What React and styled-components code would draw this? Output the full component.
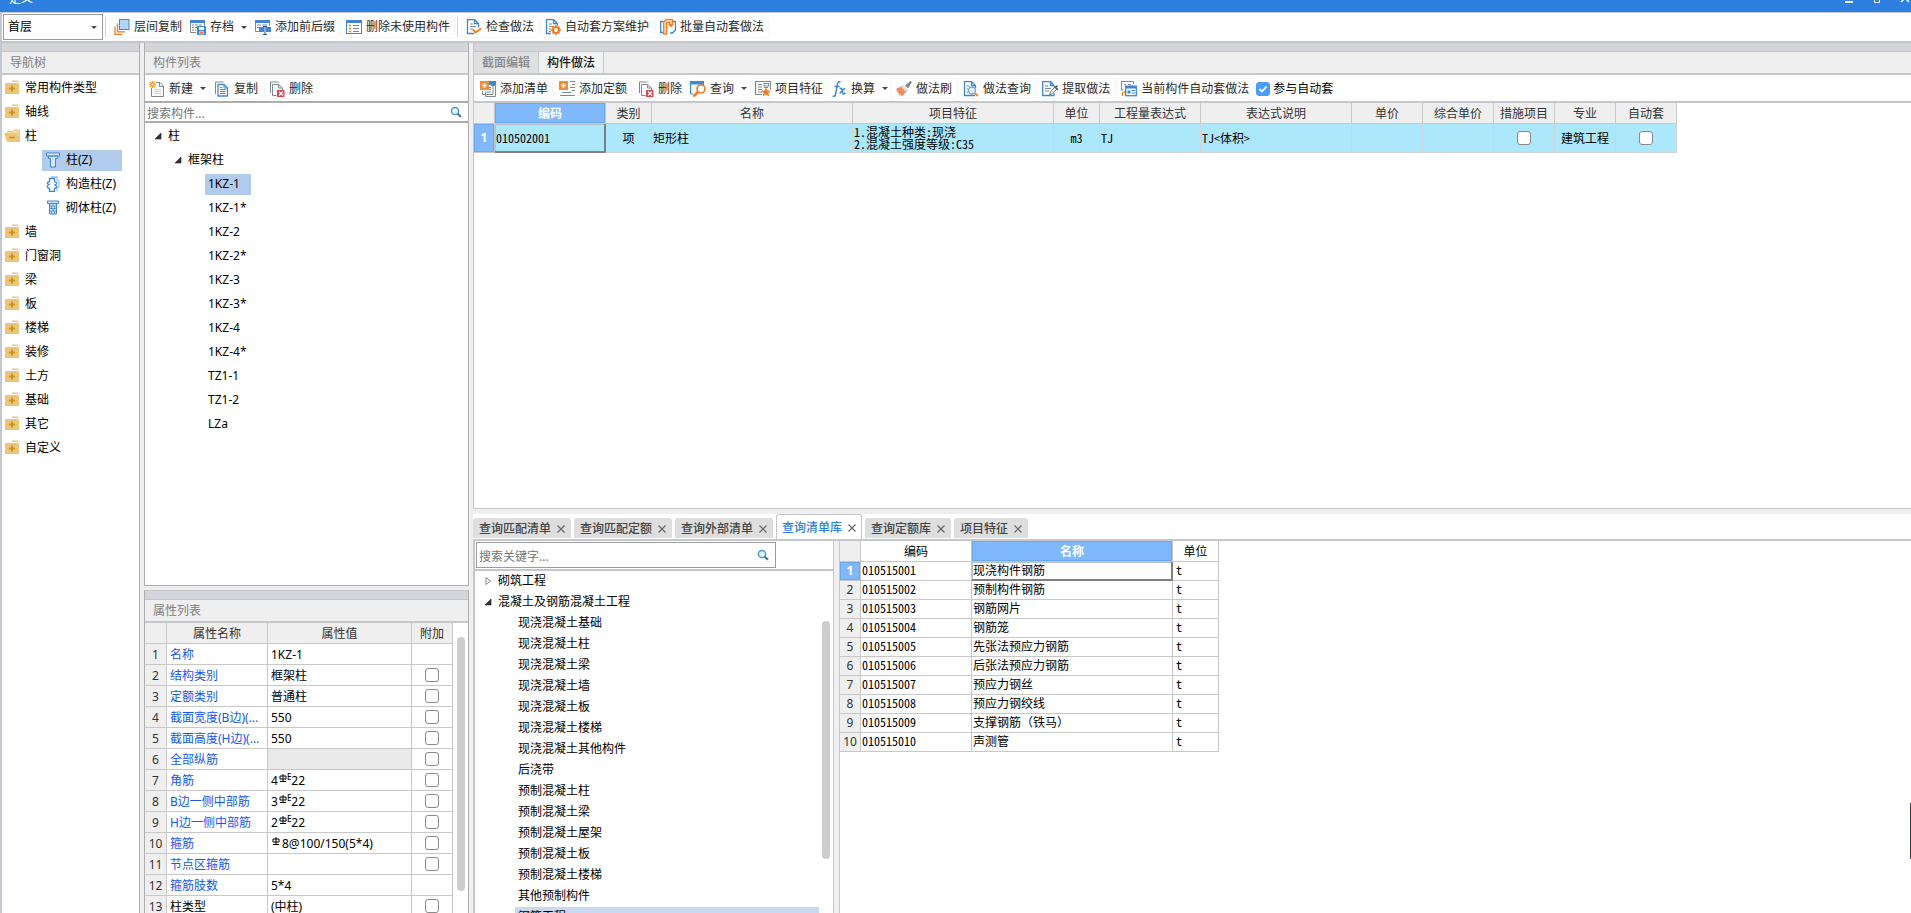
import React, { useState } from 'react'
import styled, { createGlobalStyle, css } from 'styled-components'

const line = '#c4c8cc'
const darkLine = '#adadad'
const selected = '#b1cbec'
const blue = '#3f87d6'
const orange = '#f47b20'
const slate = '#7d8992'

const uiFont = '"Noto Sans", "Noto Sans CJK SC", sans-serif'
const gridFont = '"Noto Sans Mono CJK SC", "Noto Sans CJK SC", monospace'

const GlobalStyle = createGlobalStyle`
  * {
    box-sizing: border-box;
  }

  body {
    margin: 0;
    overflow: hidden;
    background: #efefef;
    color: #000;
    font: 12px/16px ${uiFont};
  }

  button, input, select {
    margin: 0;
    font: inherit;
    color: inherit;
  }

  ul {
    margin: 0;
    padding: 0;
    list-style: none;
  }
`

const Window = styled.div`
  height: 100vh;
  display: flex;
  flex-direction: column;
  position: relative;
`

const TitleBar = styled.header`
  flex: none;
  height: 13px;
  padding-left: 9px;
  display: flex;
  align-items: flex-end;
  justify-content: space-between;
  overflow: hidden;
  background: #2d7fe0;
  border-bottom: 1px solid ${line};
  color: #fff;
`

const Title = styled.h1`
  margin: 0 0 5px;
  font-size: 12px;
  line-height: 16px;
  font-weight: normal;
`

const WindowButtons = styled.div`
  display: flex;
  gap: 16px;
  margin-bottom: 9px;
`

const WindowButton = styled.button`
  width: 12px;
  height: 10px;
  padding: 0;
  border: 0;
  background: none;
  display: flex;
  justify-content: center;
`

const Toolbar = styled.div`
  flex: none;
  height: ${props => props.$main ? 30 : 26}px;
  padding-top: ${props => props.$main ? 0 : 1}px;
  padding-left: ${props => props.$inset || 0}px;
  display: flex;
  align-items: center;
  gap: 1px;
  background: #fff;
  border-bottom: ${props => props.$main ? `2px solid ${line}` : 'none'};
  border-left: ${props => props.$main ? `2px solid ${line}` : 'none'};
`

const ToolSplit = styled.span`
  width: 1px;
  height: 20px;
  margin: 0 2px 0 1px;
  background: #d0d0d0;
`

const ToolButton = styled.button`
  height: 21px;
  padding: 0 ${props => props.$menu ? 2 : 4}px;
  border: ${props => props.$menu ? 0 : '1px solid #f6f6f6'};
  border-radius: 3px;
  background: #fff;
  color: #2a2a2a;
  display: flex;
  align-items: center;
  gap: 4px;
  white-space: nowrap;
  line-height: 18px;

  svg {
    flex: none;
  }
`

const Caret = styled.span`
  margin-left: 3px;
  width: 0;
  height: 0;
  border: 3px solid transparent;
  border-top-color: #444;
  border-bottom: 0;
`

const SelectBox = styled.label`
  width: 100px;
  height: 26px;
  display: grid;
  align-items: center;
  border: 1px solid #9b9b9b;

  > * {
    grid-area: 1 / 1;
  }

  select {
    appearance: none;
    width: 100%;
    height: 24px;
    padding: 0 0 0 4px;
    border: 0;
    background: #fff;
    outline: none;
  }

  span {
    justify-self: end;
    margin-right: 5px;
    pointer-events: none;
  }
`

const Workspace = styled.div`
  flex: 1;
  min-height: 0;
  display: grid;
  grid-template-columns: 138px 325px minmax(0, 1fr);
  gap: 4px;
  border-left: 2px solid #c3c9d4;
`

const Column = styled.div`
  min-width: 0;
  min-height: 0;
  display: grid;
  grid-template-rows: ${props => props.$rows || 'minmax(0, 1fr)'};
  gap: ${props => props.$gap || 0}px;
`

const Panel = styled.section`
  min-width: 0;
  min-height: 0;
  display: flex;
  flex-direction: column;
  overflow: hidden;
  background: #fff;
  border-style: solid;
  border-color: ${props => props.$edge || darkLine};
  border-width: ${props => props.$border || '0 1px 0 0'};
`

const DockBar = styled.div`
  flex: none;
  height: ${props => props.$capped ? 10 : 9}px;
  background: #d4d5da;
  border-bottom: 1px solid ${line};
  border-top: ${props => props.$capped ? `1px solid ${line}` : 'none'};
`

const PanelTitle = styled.h2`
  flex: none;
  height: 23px;
  margin: 0;
  padding-left: 8px;
  background: #efefef;
  border-bottom: 2px solid ${line};
  color: #808080;
  font-size: 12px;
  line-height: 21px;
  font-weight: normal;
`

const Tree = styled.ul`
  padding-top: ${props => props.$top || 0}px;
  flex: 1;
  min-width: 0;
`

const TreeRow = styled.li`
  height: ${props => props.$dense ? 21 : 24}px;
  padding-left: ${props => props.$indent}px;
  display: flex;
  align-items: ${props => props.$dense ? 'stretch' : 'center'};
`

const TreeButton = styled.button`
  height: 21px;
  padding: 0 ${props => props.$pad || 3}px;
  border: 0;
  background: ${props => props.$active ? props.$tint || selected : 'none'};
  width: ${props => props.$width || 'auto'};
  display: flex;
  align-items: center;
  gap: ${props => props.$gap || 0}px;
  line-height: 20px;
  text-align: left;
  white-space: nowrap;

  ${props => props.$dense && css`
    padding-bottom: 2px;
    line-height: 19px;
  `}
`

const SearchRow = styled.div`
  flex: none;
  border-bottom: 2px solid ${line};
  ${props => props.$boxed ? css`
    padding: 1px 0 1px 1px;
  ` : css`
    border-color: ${darkLine};
    border-top: 2px solid ${darkLine};
  `}
`

const SearchField = styled.label`
  display: flex;
  align-items: center;
  justify-content: space-between;
  width: ${props => props.$boxed ? '300px' : 'auto'};
  height: ${props => props.$boxed ? 26 : 18}px;
  padding: 0 4px 0 2px;
  border: ${props => props.$boxed ? '1px solid #9b9b9b' : 0};

  input {
    flex: 1;
    min-width: 0;
    height: 18px;
    padding: 2px 0 0;
    border: 0;
    outline: none;
    background: none;
  }

  input::placeholder {
    color: #757575;
    opacity: 1;
  }
`

const Check = styled.input.attrs({ type: 'checkbox' })`
  appearance: none;
  display: block;
  width: 14px;
  height: 14px;
  margin: 0 auto;
  border: 1px solid #8a8a8a;
  border-radius: 3px;
  background: #fff;

  &:checked {
    border-color: #4b9cf5;
    background: #4b9cf5 url("data:image/svg+xml,%3Csvg xmlns='http://www.w3.org/2000/svg' viewBox='0 0 12 12'%3E%3Cpath d='M2.5 6l2.5 2.5L9.5 3.5' fill='none' stroke='white' stroke-width='1.8'/%3E%3C/svg%3E") center / 12px;
  }
`

const CheckLabel = styled.label`
  margin-left: 1px;
  display: flex;
  align-items: center;
  gap: 3px;
  white-space: nowrap;
`

const Grid = styled.table`
  flex: none;
  table-layout: fixed;
  border-collapse: separate;
  border-spacing: 0;
  width: ${props => props.$width}px;

  th, td {
    padding: 0 1px;
    height: ${props => props.$row}px;
    line-height: ${props => props.$row - 1}px;
    border: 0 solid #c8c8c8;
    border-width: 0 1px 1px 0;
    text-align: left;
    font-weight: normal;
    white-space: nowrap;
    overflow: hidden;
    text-overflow: ellipsis;
  }

  thead th, thead td {
    height: 21px;
    padding-top: 2px;
    line-height: 18px;
    text-align: center;
  }

  thead th {
    background: ${props => props.$plainHead ? '#fff' : '#efefef'};
    color: ${props => props.$plainHead ? '#000' : '#333'};
  }

  thead td, tbody th {
    background: #efefef;
    color: #333;
    text-align: center;
  }

  tbody th {
    padding: 0;
  }
`

const WorkGrid = styled(Grid)`
  tbody td {
    background: #abe8fb;
    border-color: #d0d4d6;
    font-family: ${gridFont};
    line-height: 12px;
  }
`

const LibraryGrid = styled(Grid)`
  tbody td {
    padding-bottom: 2px;
    font-family: ${gridFont};
    line-height: 16px;
  }

  tbody td:last-child {
    padding-left: 3px;
  }
`

const PropGrid = styled(Grid)`
  tbody td, tbody th {
    padding-top: 2px;
    line-height: 18px;
  }

  tbody td {
    padding-left: 3px;
  }

  tbody td:last-child {
    padding: 0;
  }
`

const activeCell = css`
  && {
    background: #7fb9fb;
    color: #fff;
    font-weight: bold;
    box-shadow: inset 0 0 0 1px #6aa9f2;
  }
`

const HeadCell = styled.th`
  width: ${props => props.$width}px;
  ${props => props.$active && activeCell}
`

const IndexCell = styled.th`
  ${props => props.$active && activeCell}
`

const Cell = styled.td`
  && {
    text-align: ${props => props.$center ? 'center' : 'left'};
    color: ${props => props.$color || 'inherit'};
    background: ${props => props.$fill};
    ${props => props.$focus && css`
      box-shadow: inset -1px -1px 0 #7f7f7f, inset 1px 1px 0 #b5c0c4;
      border-color: #7f7f7f;
    `}
  }
`

const DocTabs = styled.div`
  flex: none;
  height: 23px;
  display: flex;
  background: #efefef;
  border-bottom: 2px solid ${line};
`

const DocTab = styled.button`
  padding: 0 8px;
  border: 0;
  border-right: 1px solid ${line};
  background: ${props => props.$active ? '#f2f2f2' : '#e0e0e0'};
  color: ${props => props.$active ? '#1a1a1a' : '#858585'};
  font-weight: 500;
  line-height: 20px;
`

const GridArea = styled.div`
  flex: 1;
  min-height: 0;
  border-top: 2px solid ${line};
`

const QueryTabs = styled.div`
  flex: none;
  height: 27px;
  display: flex;
  align-items: flex-end;
  gap: 3px;
  background: #fff;
  border-bottom: 2px solid ${line};
`

const QueryTab = styled.div`
  height: 20px;
  margin-bottom: 1px;
  padding: 1px 6px 0;
  display: flex;
  align-items: center;
  gap: 6px;
  border-radius: 3px 3px 0 0;
  background: #dedede;
  color: #444;

  button {
    padding: 0;
    border: 0;
    background: none;
    line-height: 18px;
    font-weight: 500;
  }

  button + button {
    color: #666;
    line-height: 0;
  }

  ${props => props.$active && css`
    height: 25px;
    margin-bottom: 0;
    padding: 1px 5px 0;
    border: 1px solid ${line};
    border-bottom: 0;
    background: #fff;
    color: #2d7fe0;
  `}
`

const QueryBody = styled.div`
  flex: 1;
  min-height: 0;
  display: grid;
  grid-template-columns: 361px minmax(0, 1fr);
  gap: 5px;
  background: #efefef;
`

const Scrolled = styled.div`
  flex: 1;
  min-height: 0;
  display: flex;
  overflow: hidden;
`

const Track = styled.div`
  flex: none;
  width: ${props => props.$width}px;
  padding-top: ${props => props.$top}px;
  display: flex;
  justify-content: center;
`

const Thumb = styled.div`
  width: 8px;
  height: ${props => props.$size}px;
  border-radius: 4px;
  background: #cdcdcd;
`

const EdgeHandle = styled.div`
  position: absolute;
  right: 0;
  top: 88%;
  width: 1px;
  height: 56px;
  background: #3b3b45;
`

const Bar = styled.span`
  display: inline-flex;
  align-items: flex-start;
  margin-right: ${props => props.$wide ? 2 : 0}px;
  vertical-align: 2px;

  svg {
    margin: 1px 0 0 1px;
  }

  sup {
    font-size: 8px;
    line-height: 8px;
    font-weight: 500;
    vertical-align: top;
  }
`

const glyphs = {
  layers: (
    <>
      <path d='M1 7.500V15.300h7' fill='none' stroke={orange} strokeWidth='1.300' />
      <path d='M3.500 4.500v8.300h7.500' fill='none' stroke={orange} strokeWidth='1.300' />
      <rect x='5.500' y='.5' width='9.500' height='10' fill='#b5d6fb' stroke={blue} />
    </>
  ),
  archive: (
    <>
      <path d='M.5 13.500V1.500h14v6M.5 13.500H6' fill='none' stroke={slate} />
      <path d='M0 1h15v3H0z' fill={blue} />
      <path d='M2 6h2m1 0h3m1 0h3M2 8.500h2m1 0h2M2 11h2m1 0h1' stroke={slate} fill='none' />
      <rect x='7' y='7' width='9' height='9' rx='1' fill={blue} />
      <path d='M9 8h5v3H9z' fill='#fff' />
      <path d='M9.500 12.500h4V15h-4z' fill={orange} stroke='#fff' strokeWidth='.5' />
    </>
  ),
  affix: (
    <>
      <path d='M.5 12.500V1.500h14v5M.5 12.500H4' fill='none' stroke={slate} />
      <path d='M0 1h15v3H0z' fill={blue} />
      <path d='M2 6h4m1 0h5M2 8.500h2' stroke={slate} fill='none' />
      <path d='M4 8h5v5H4zM11 8h5v5h-5z' fill={blue} />
      <path d='M10 7.500v8M8 15.500h4M8 7.500h4' stroke='#24588f' fill='none' />
    </>
  ),
  unused: (
    <>
      <rect x='.5' y='1.500' width='15' height='13' fill='#fff' stroke={blue} />
      <path d='M0 1h16v3H0z' fill={blue} />
      <path d='M3 6.500h2M3 9.500h2M3 12.500h2' stroke={orange} strokeWidth='1.600' />
      <path d='M7 6.500h6M7 9.500h6M7 12.500h6' stroke={slate} />
    </>
  ),
  check: (
    <>
      <path d='M8 14.500H1.500V.5h7l4 4v4M8.500.5v4h4' fill='none' stroke={blue} strokeWidth='1.300' />
      <path d='M4 5h3M4 7.500h6M4 10h3' stroke={slate} />
      <path d='M7 10.500l2.500 3 5.500-4' fill='none' stroke={orange} strokeWidth='2' />
    </>
  ),
  scheme: (
    <>
      <path d='M6 14.500H1.500V.5h7l4 4v2M8.500.5v4h4' fill='none' stroke={blue} strokeWidth='1.300' />
      <path d='M4 5h3M4 7.500h4M4 10h2M4 12.500h2' stroke={slate} />
      <circle cx='11' cy='11' r='3' fill='#fff' stroke={orange} strokeWidth='2.200' />
      <path d='M11 6v2M11 14v2M6 11h2M14 11h2M7.500 7.500l1.500 1.500M14.500 7.500L13 9M7.500 14.500L9 13M14.500 14.500L13 13' stroke={orange} strokeWidth='1.500' />
    </>
  ),
  batch: (
    <>
      <path d='M3 2.500H.7v11H3M10 14h2.500l3-3V2.500H13' fill='none' stroke={blue} strokeWidth='1.300' />
      <path d='M6 .7h6.500V5M6 .7L3.700 3v12h3V3.500H10V6' fill='#ffd9b8' stroke={orange} strokeWidth='1.300' />
      <path d='M8 5h6l-3 3.500z' fill={orange} />
    </>
  ),
  newFile: (
    <>
      <path d='M2.500 7v8.500h12V5L11 1.500H7' fill='none' stroke={slate} />
      <path d='M10.500 1.500V5.500h4' fill='none' stroke={slate} />
      <path d='M5 8.500h7M5 10.500h7M5 12.500h7' stroke='#d6cfe0' />
      <path d='M1 1l5 5M6 1L1 6M3.500 0v7M0 3.500h7' stroke='#f3971c' strokeWidth='1.200' />
      <circle cx='3.500' cy='3.500' r='1' fill='#fff' />
    </>
  ),
  copy: (
    <>
      <path d='M1.500 13V1h8' fill='none' stroke={slate} />
      <path d='M4 3.500h6L13.500 7v8H4z' fill='#fff' stroke={blue} strokeWidth='1.300' />
      <path d='M10 3.500V7h3.500M6 6.500h2M6 8.500h5.500M6 10.500h5.500M6 12.500h5.500' fill='none' stroke={blue} />
    </>
  ),
  remove: (
    <>
      <path d='M1.500 12V1h8' fill='none' stroke={slate} />
      <path d='M7.500 14.500h-4v-11h6l4 3.500v2M9.500 3.500V7h4' fill='none' stroke={slate} />
      <rect x='8' y='9' width='7.500' height='7' fill='#cf4a4f' />
      <path d='M10 10.500l4 4M14 10.500l-4 4' stroke='#fff' strokeWidth='1.100' />
    </>
  ),
  bill: (
    <>
      <path d='M11 4.500h4.500v11h-10V12' fill='none' stroke={slate} />
      <path d='M2.500 10v3.500h10.500V2' fill='none' stroke={slate} />
      <path d='M9 6.500h2M9 8.500h2M5 11h6' stroke={slate} />
      <path d='M9 0h7v4H9z' fill={blue} />
      <rect width='9' height='9' fill='#ec8f3c' />
      <path d='M4.500 2v5M2 4.500h5' stroke='#fff' strokeWidth='1.300' />
    </>
  ),
  quota: (
    <>
      <rect width='9' height='9' fill='#ec8f3c' />
      <path d='M4.500 2v5M2 4.500h5' stroke='#fff' strokeWidth='1.300' />
      <path d='M11 .5h5M13 3.500h3M11 6.500h5M13 9.500h3M3 11.500h9M1 14.500h15' stroke={slate} />
    </>
  ),
  query: (
    <>
      <path d='M.6 13V1.500h12.800V4M.6 13H3' fill='none' stroke={blue} strokeWidth='1.200' />
      <path d='M0 0h14v3.500H0z' fill={blue} />
      <circle cx='11' cy='8' r='4' fill='#fff' stroke={orange} strokeWidth='1.700' />
      <path d='M8 11l-4.500 4.500' stroke={orange} strokeWidth='2.600' />
    </>
  ),
  feature: (
    <>
      <path d='M7 13.500H.5V.5h15v8' fill='none' stroke={slate} strokeWidth='1.200' />
      <path d='M3 3.500h4M3 6h4M3 8.500h4M3 11h4M9 6.500h4' stroke={slate} />
      <rect x='9' y='2.500' width='4.500' height='2.500' fill='none' stroke={slate} />
      <path d='M11 6.500l1.500 3 3.500.3-2.600 2.200.9 3.500-3.300-1.900-3.300 1.900.9-3.500L6 9.800l3.500-.3z' fill={orange} />
    </>
  ),
  formula: (
    <path d='M9.500 1.300C7.500-.2 6.600 1.500 6.200 4L4.700 12.500C4.200 15.500 3 16 1.800 14.700M3.500 5.500h5.200M8.800 8c2-1.800 2.300.4 2.700 2.800s1 3.200 2.700 1M14.300 7.700c-1.600-.6-4.700 4.300-5.700 4.700' fill='none' stroke={blue} strokeWidth='1.500' />
  ),
  brush: (
    <>
      <path d='M0 8l6-3 5 5-5 5.500L4.500 13 4 15z' fill='#f28a5e' />
      <path d='M7 4l5.500 5.500L10 11 5 6z' fill='#d9dde0' />
      <path d='M9 4.500L14.500 0l1.500 1-4 6.500z' fill='#7b8791' />
    </>
  ),
  lookup: (
    <>
      <path d='M12 14.500H1.500V.5h7l4 4V7M8.500.5v4h4' fill='none' stroke={blue} strokeWidth='1.300' />
      <path d='M3.500 5h3M3.500 8h1.500M3.500 11h1.500' stroke={slate} />
      <circle cx='9' cy='9.500' r='3.500' fill='#e5effb' stroke='#7aa5d8' strokeWidth='1.300' />
      <path d='M11.500 12l3.500 3' stroke='#ef8e22' strokeWidth='2.200' />
    </>
  ),
  extract: (
    <>
      <path d='M12 12v2.500H.7V.5h7.800l3.500 4M8.500.5v4H12' fill='none' stroke={blue} strokeWidth='1.300' />
      <path d='M3 5h3M3 7.500h6M3 10h4' stroke={slate} />
      <path d='M7.500 14l1-3.500L13 6l2 2-4.500 4.500z' fill='#dfe9ef' stroke='#6c8796' />
      <path d='M12 5l4 4M13.500 6.500L15.500 4.500' stroke='#50606c' strokeWidth='1.700' />
    </>
  ),
  current: (
    <>
      <path d='M2.500 9H.5V.5h12V3M3 3.500h2M7 3.500h3' fill='none' stroke={slate} />
      <path d='M1.500 15v-4M3.500 12v-2' stroke={orange} strokeWidth='1.200' />
      <rect x='4.700' y='5.700' width='10.600' height='9' fill='#fff' stroke={blue} strokeWidth='1.300' />
      <path d='M4 4.500h12v3H4zM6.500 9.500h3v3h-3z' fill={blue} />
      <path d='M10.500 9.500H14M10.500 12h3.500' stroke={blue} />
    </>
  ),
  folder: (
    <>
      <path d='M8.500 .5h5.500l1 1.500H7.500z' fill='#edc577' />
      <rect x='1' y='3' width='14' height='11' rx='.5' fill='#edc577' />
      <path d='M8 5.500v6M5 8.500h6' stroke='#c8912b' strokeWidth='2' />
    </>
  ),
  folderOpen: (
    <>
      <path d='M3.500 5V3.500h5l1-1.500h6v12' fill='#f4dca8' stroke='#edc577' />
      <path d='M0 5h14l1.500 9H3z' fill='#edc577' />
      <path d='M5 9.500h6' stroke='#c8912b' strokeWidth='1.500' />
    </>
  ),
  column: (
    <path d='M1.500 1h13v3h-13zM3.500 4h9v2.500h-2V15h-5V6.500h-2z' fill='#d9e9fb' stroke={blue} />
  ),
  tieColumn: (
    <>
      <path d='M6 1h6v3l2 1v6l-2 1v3' fill='none' stroke='#9cc3f1' strokeWidth='1.300' />
      <path d='M4.500 2.500h5v3l2 1v1.500l-1.500 1 1.500 1v1.500l-2 1v3h-5v-3l-2-1V9.500L4 8.500 2.500 7.500V6.500l2-1z' fill='#fff' stroke={blue} strokeWidth='1.300' />
    </>
  ),
  masonry: (
    <>
      <path d='M2.500 1h11v2.500h-11zM4.500 3.500h7V14h-7z' fill='#cfe3fa' stroke={blue} />
      <path d='M4.500 6h7M4.500 8.500h7M4.500 11h7M8 3.500V6M6.500 6v2.500M9.500 6v2.500M8 8.500V11M6.500 11v3M9.500 11v3' stroke={blue} fill='none' strokeWidth='.8' />
    </>
  ),
  search: (
    <>
      <circle cx='7' cy='7' r='3.600' fill='#e9f5fc' stroke='#4a9bd0' strokeWidth='1.500' />
      <path d='M9.700 9.700l3.300 3' stroke='#2d78b0' strokeWidth='2.200' />
    </>
  )
}

const Icon = ({ name }) => (
  <svg width='16' height='16' viewBox='0 0 16 16' aria-hidden='true'>{glyphs[name]}</svg>
)

const Toggle = ({ open }) => (
  <svg width='8' height='8' viewBox='0 0 8 8' aria-hidden='true'>
    {open
      ? <path d='M7 1v6H1z' fill='#333' stroke='#222' strokeWidth='.6' />
      : <path d='M2 0.500v7L6.500 4z' fill='#fff' stroke='#888' />}
  </svg>
)

const Cross = () => (
  <svg width='8' height='8' viewBox='0 0 8 8' aria-hidden='true'>
    <path d='M.5.5l7 7M7.500.5l-7 7' stroke='currentColor' strokeWidth='1.200' />
  </svg>
)

const Rebar = ({ seismic }) => (
  <Bar $wide={!seismic}>
    <svg width='8' height='9' viewBox='0 0 8 9' aria-hidden='true'>
      <path d='M1 2h6v3H1zM4 0v8M1 7.500h6' fill='none' stroke='#000' />
    </svg>
    {seismic && <sup>E</sup>}
  </Bar>
)

const Tool = ({ icon, children, menu }) => (
  <ToolButton $menu={menu}>
    <Icon name={icon} />
    {children}
    {menu && <Caret />}
  </ToolButton>
)

const Search = ({ placeholder, boxed }) => (
  <SearchRow $boxed={boxed}>
    <SearchField $boxed={boxed}>
      <input type='text' placeholder={placeholder} aria-label={placeholder} />
      <Icon name='search' />
    </SearchField>
  </SearchRow>
)

const navItems = [
  { label: '常用构件类型' },
  { label: '轴线' },
  { label: '柱', open: true },
  { label: '柱(Z)', icon: 'column' },
  { label: '构造柱(Z)', icon: 'tieColumn' },
  { label: '砌体柱(Z)', icon: 'masonry' },
  { label: '墙' },
  { label: '门窗洞' },
  { label: '梁' },
  { label: '板' },
  { label: '楼梯' },
  { label: '装修' },
  { label: '土方' },
  { label: '基础' },
  { label: '其它' },
  { label: '自定义' }
]

const components = ['1KZ-1', '1KZ-1*', '1KZ-2', '1KZ-2*', '1KZ-3', '1KZ-3*', '1KZ-4', '1KZ-4*', 'TZ1-1', 'TZ1-2', 'LZa']

const properties = [
  { name: '名称', value: '1KZ-1', noCheck: true },
  { name: '结构类别', value: '框架柱' },
  { name: '定额类别', value: '普通柱' },
  { name: '截面宽度(B边)(...', value: '550' },
  { name: '截面高度(H边)(...', value: '550' },
  { name: '全部纵筋', value: '', disabled: true },
  { name: '角筋', value: <>4<Rebar seismic />22</> },
  { name: 'B边一侧中部筋', value: <>3<Rebar seismic />22</> },
  { name: 'H边一侧中部筋', value: <>2<Rebar seismic />22</> },
  { name: '箍筋', value: <><Rebar />8@100/150(5*4)</> },
  { name: '节点区箍筋', value: '' },
  { name: '箍筋肢数', value: '5*4', noCheck: true },
  { name: '柱类型', value: '(中柱)', plain: true }
]

const workColumns = [
  ['编码', 111], ['类别', 46], ['名称', 201], ['项目特征', 201], ['单位', 46], ['工程量表达式', 101],
  ['表达式说明', 151], ['单价', 71], ['综合单价', 71], ['措施项目', 61], ['专业', 61], ['自动套', 61]
]

const chapters = [
  '现浇混凝土基础', '现浇混凝土柱', '现浇混凝土梁', '现浇混凝土墙', '现浇混凝土板', '现浇混凝土楼梯',
  '现浇混凝土其他构件', '后浇带', '预制混凝土柱', '预制混凝土梁', '预制混凝土屋架', '预制混凝土板',
  '预制混凝土楼梯', '其他预制构件', '钢筋工程'
]

const library = [
  ['010515001', '现浇构件钢筋'],
  ['010515002', '预制构件钢筋'],
  ['010515003', '钢筋网片'],
  ['010515004', '钢筋笼'],
  ['010515005', '先张法预应力钢筋'],
  ['010515006', '后张法预应力钢筋'],
  ['010515007', '预应力钢丝'],
  ['010515008', '预应力钢绞线'],
  ['010515009', '支撑钢筋（铁马）'],
  ['010515010', '声测管']
]

const queryTabs = ['查询匹配清单', '查询匹配定额', '查询外部清单', '查询清单库', '查询定额库', '项目特征']

const NavPanel = () => {
  const [current, setCurrent] = useState('柱(Z)')

  return (
    <Panel>
      <DockBar />
      <PanelTitle>导航树</PanelTitle>
      <Tree $top={1}>
        {navItems.map(({ label, icon, open }) => (
          <TreeRow key={label} $indent={icon ? 40 : 1}>
            <TreeButton
              $active={current === label}
              $width={icon && '80px'}
              $gap={5}
              $pad={icon ? 3 : 1}
              onClick={() => setCurrent(label)}
            >
              <Icon name={icon || (open ? 'folderOpen' : 'folder')} />
              {label}
            </TreeButton>
          </TreeRow>
        ))}
      </Tree>
    </Panel>
  )
}

const ComponentPanel = () => {
  const [current, setCurrent] = useState('1KZ-1')

  return (
    <Panel $border='0 1px 1px 1px'>
      <DockBar />
      <PanelTitle>构件列表</PanelTitle>
      <Toolbar $inset={2}>
        <Tool icon='newFile' menu>新建</Tool>
        <Tool icon='copy'>复制</Tool>
        <Tool icon='remove'>删除</Tool>
      </Toolbar>
      <Search placeholder='搜索构件...' />
      <Tree $top={1}>
        <TreeRow $indent={6}>
          <TreeButton $gap={6}><Toggle open />柱</TreeButton>
        </TreeRow>
        <TreeRow $indent={26}>
          <TreeButton $gap={6}><Toggle open />框架柱</TreeButton>
        </TreeRow>
        {components.map(name => (
          <TreeRow key={name} $indent={60}>
            <TreeButton $active={current === name} $width='46px' onClick={() => setCurrent(name)}>{name}</TreeButton>
          </TreeRow>
        ))}
      </Tree>
    </Panel>
  )
}

const PropertyPanel = () => (
  <Panel $border='0 1px'>
    <DockBar $capped />
    <PanelTitle>属性列表</PanelTitle>
    <Scrolled>
      <PropGrid $width={308} $row={21}>
        <thead>
          <tr>
            <HeadCell as='td' $width={22} />
            <HeadCell $width={101}>属性名称</HeadCell>
            <HeadCell $width={144}>属性值</HeadCell>
            <HeadCell $width={41}>附加</HeadCell>
          </tr>
        </thead>
        <tbody>
          {properties.map((item, i) => (
            <tr key={item.name}>
              <IndexCell>{i + 1}</IndexCell>
              <Cell $color={item.plain ? '#000' : '#1457f5'}>{item.name}</Cell>
              <Cell $fill={item.disabled && '#eaeaea'}>{item.value}</Cell>
              <Cell>{!item.noCheck && <Check aria-label={`附加 ${item.name}`} />}</Cell>
            </tr>
          ))}
        </tbody>
      </PropGrid>
      <Track $width={16} $top={14}>
        <Thumb $size={254} />
      </Track>
    </Scrolled>
  </Panel>
)

const WorkPanel = () => (
  <Panel $border='0 0 1px 1px' $edge={line}>
    <DockBar />
    <DocTabs>
      <DocTab>截面编辑</DocTab>
      <DocTab $active>构件做法</DocTab>
    </DocTabs>
    <Toolbar $inset={1}>
      <Tool icon='bill'>添加清单</Tool>
      <Tool icon='quota'>添加定额</Tool>
      <Tool icon='remove'>删除</Tool>
      <Tool icon='query' menu>查询</Tool>
      <Tool icon='feature'>项目特征</Tool>
      <Tool icon='formula' menu>换算</Tool>
      <Tool icon='brush'>做法刷</Tool>
      <Tool icon='lookup'>做法查询</Tool>
      <Tool icon='extract'>提取做法</Tool>
      <Tool icon='current'>当前构件自动套做法</Tool>
      <CheckLabel><Check defaultChecked />参与自动套</CheckLabel>
    </Toolbar>
    <GridArea>
      <WorkGrid $width={1203} $row={29}>
        <thead>
          <tr>
            <HeadCell as='td' $width={21} />
            {workColumns.map(([label, width], i) => (
              <HeadCell key={label} $width={width} $active={i === 0}>{label}</HeadCell>
            ))}
          </tr>
        </thead>
        <tbody>
          <tr>
            <IndexCell $active>1</IndexCell>
            <Cell $focus>010502001</Cell>
            <Cell $center>项</Cell>
            <Cell>矩形柱</Cell>
            <Cell>1.混凝土种类:现浇<br />2.混凝土强度等级:C35</Cell>
            <Cell $center>m3</Cell>
            <Cell>TJ</Cell>
            <Cell>TJ&lt;体积&gt;</Cell>
            <Cell />
            <Cell />
            <Cell><Check aria-label='措施项目' /></Cell>
            <Cell $center>建筑工程</Cell>
            <Cell><Check aria-label='自动套' /></Cell>
          </tr>
        </tbody>
      </WorkGrid>
    </GridArea>
  </Panel>
)

const QueryPanel = () => {
  const [tab, setTab] = useState('查询清单库')
  const [chapter, setChapter] = useState('钢筋工程')

  return (
    <Panel $border='0'>
      <QueryTabs>
        {queryTabs.map(label => (
          <QueryTab key={label} $active={tab === label}>
            <button onClick={() => setTab(label)}>{label}</button>
            <button aria-label={`关闭 ${label}`}><Cross /></button>
          </QueryTab>
        ))}
      </QueryTabs>
      <QueryBody>
        <Panel $border='0 1px 0 2px' $edge={line}>
          <Search placeholder='搜索关键字...' boxed />
          <Scrolled>
            <Tree>
              <TreeRow $dense $indent={6}>
                <TreeButton $dense $gap={6}><Toggle />砌筑工程</TreeButton>
              </TreeRow>
              <TreeRow $dense $indent={6}>
                <TreeButton $dense $gap={6}><Toggle open />混凝土及钢筋混凝土工程</TreeButton>
              </TreeRow>
              {chapters.map(name => (
                <TreeRow key={name} $dense $indent={40}>
                  <TreeButton
                    $dense
                    $width='100%'
                    $tint='#c8d9f0'
                    $active={chapter === name}
                    onClick={() => setChapter(name)}
                  >
                    {name}
                  </TreeButton>
                </TreeRow>
              ))}
            </Tree>
            <Track $width={14} $top={50}>
              <Thumb $size={238} />
            </Track>
          </Scrolled>
        </Panel>
        <Panel $border='0 0 0 1px' $edge={line}>
          <LibraryGrid $width={379} $row={19} $plainHead>
            <thead>
              <tr>
                <HeadCell as='td' $width={21} />
                <HeadCell $width={111}>编码</HeadCell>
                <HeadCell $width={201} $active>名称</HeadCell>
                <HeadCell $width={46}>单位</HeadCell>
              </tr>
            </thead>
            <tbody>
              {library.map(([code, name], i) => (
                <tr key={code}>
                  <IndexCell $active={i === 0}>{i + 1}</IndexCell>
                  <Cell>{code}</Cell>
                  <Cell $focus={i === 0}>{name}</Cell>
                  <Cell>t</Cell>
                </tr>
              ))}
            </tbody>
          </LibraryGrid>
        </Panel>
      </QueryBody>
    </Panel>
  )
}

const App = () => (
  <Window>
    <GlobalStyle />
    <TitleBar>
      <Title>定义</Title>
      <WindowButtons>
        <WindowButton aria-label='最小化'>
          <svg width='10' height='10'><path d='M1 9h8' stroke='#fff' strokeWidth='2' /></svg>
        </WindowButton>
        <WindowButton aria-label='最大化'>
          <svg width='10' height='10'><path d='M2.500 1h5v8.500h-5z' stroke='#fff' fill='none' /></svg>
        </WindowButton>
        <WindowButton aria-label='关闭'>
          <svg width='10' height='10'><path d='M1 1l8 8M9 1l-8 8' stroke='#fff' strokeWidth='1.500' /></svg>
        </WindowButton>
      </WindowButtons>
    </TitleBar>
    <Toolbar $main $inset={1}>
      <SelectBox>
        <select aria-label='楼层' defaultValue='首层'>
          <option>基础层</option>
          <option>首层</option>
          <option>第2层</option>
        </select>
        <Caret />
      </SelectBox>
      <ToolSplit />
      <Tool icon='layers'>层间复制</Tool>
      <Tool icon='archive' menu>存档</Tool>
      <Tool icon='affix'>添加前后缀</Tool>
      <Tool icon='unused'>删除未使用构件</Tool>
      <ToolSplit />
      <Tool icon='check'>检查做法</Tool>
      <Tool icon='scheme'>自动套方案维护</Tool>
      <Tool icon='batch'>批量自动套做法</Tool>
    </Toolbar>
    <Workspace>
      <Column>
        <NavPanel />
      </Column>
      <Column $rows='minmax(0, 1fr) 323px' $gap={4}>
        <ComponentPanel />
        <PropertyPanel />
      </Column>
      <Column $rows='minmax(0, 1fr) 399px' $gap={5}>
        <WorkPanel />
        <QueryPanel />
      </Column>
    </Workspace>
    <EdgeHandle />
  </Window>
)

export default App
